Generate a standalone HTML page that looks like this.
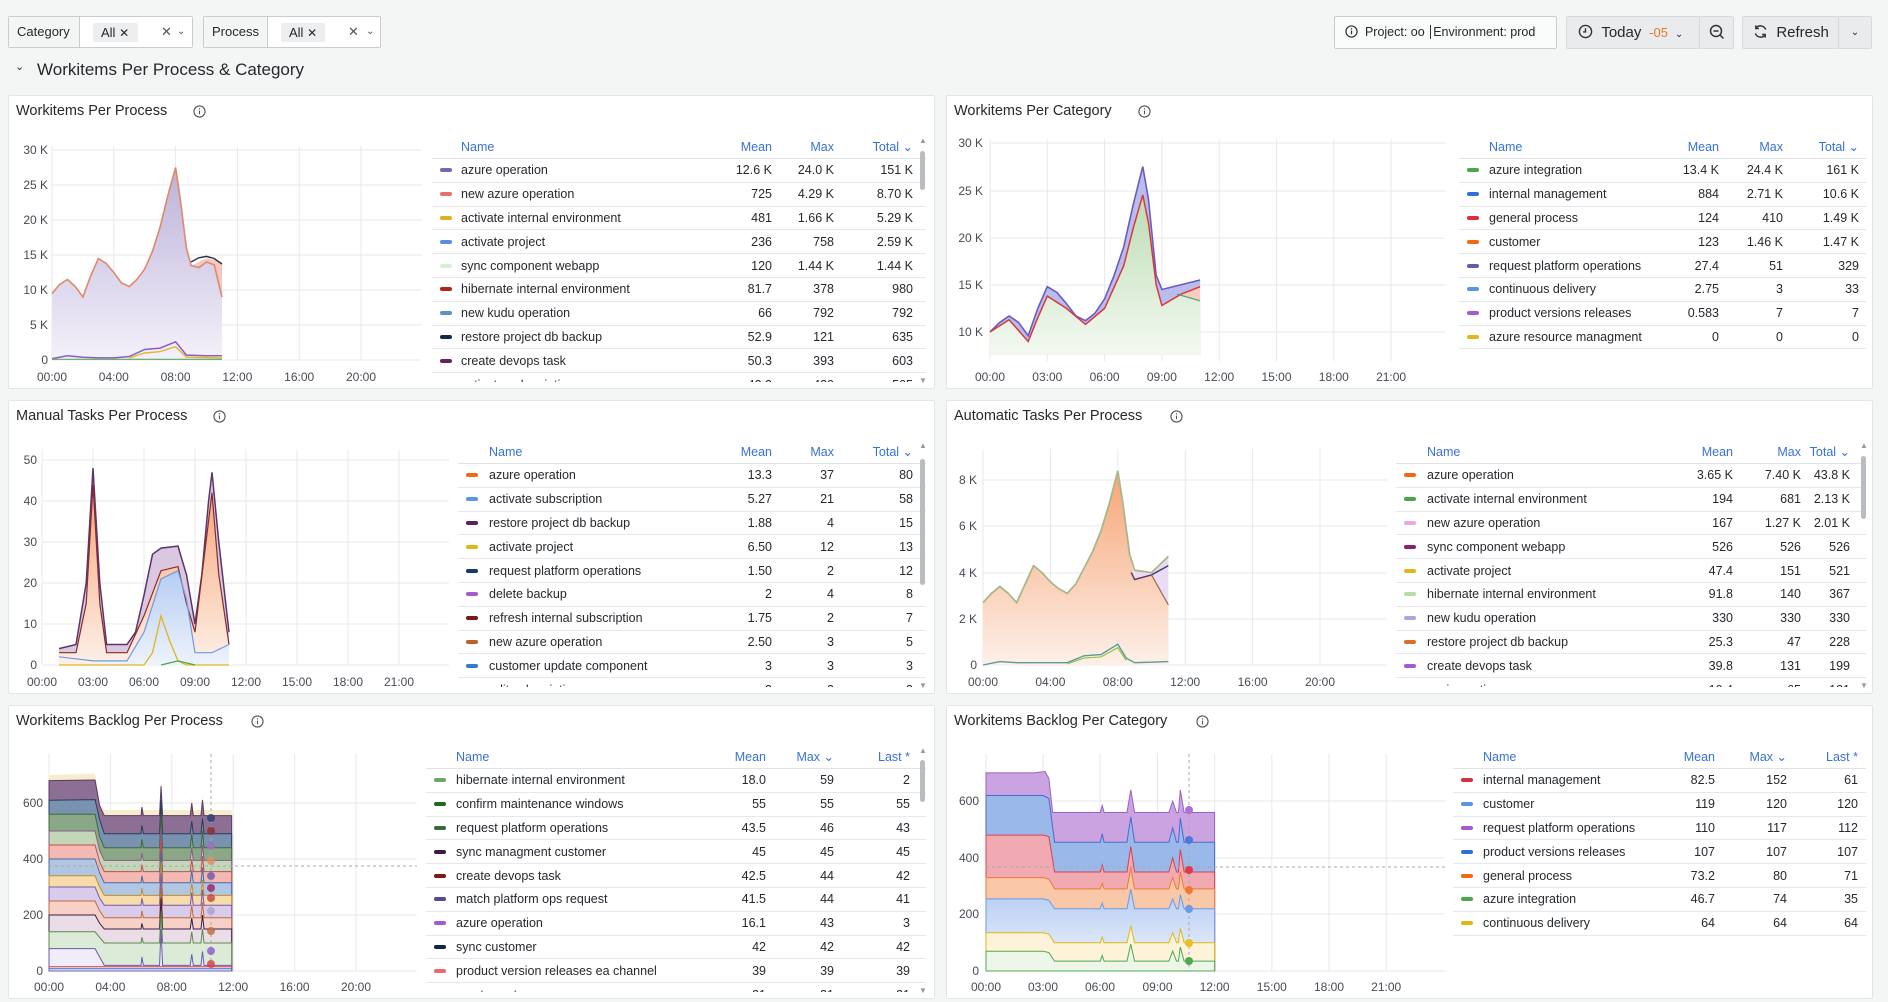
<!DOCTYPE html>
<html><head><meta charset="utf-8">
<style>
*{box-sizing:border-box}
body{margin:0;width:1888px;height:1002px;background:#f4f5f5;font-family:"Liberation Sans",sans-serif;color:#24292e;position:relative;overflow:hidden}
.abs{position:absolute}
.fbox{position:absolute;top:16px;height:32px;border:1px solid #c9ccd1;background:#fff;border-radius:2px;font-size:13px}
.flabel{position:absolute;left:0;top:0;bottom:0;background:#f4f5f5;border-right:1px solid #c9ccd1;padding:0 8px;line-height:30px}
.chip{position:absolute;top:6px;height:19px;background:#eceef0;border-radius:2px;line-height:19px;padding-left:8px;font-size:13px}
.ic{position:absolute;top:0;line-height:30px;color:#555;font-size:13px}
.btn{position:absolute;top:16px;height:33px;background:#e9ebed;border:1px solid #d6d9dd;border-radius:2px;font-size:15px;line-height:31px}
.panel{position:absolute;background:#fff;border:1px solid #e3e5e8;border-radius:2px;width:927px;height:294px;overflow:hidden}
.pt{position:absolute;left:7px;top:7px;font-size:14.5px;color:#24292e}
.info{position:absolute;top:9px}
svg text{font-family:"Liberation Sans",sans-serif;font-size:12px;fill:#464c54}
.tbl{position:absolute;top:39px;height:247px;overflow:hidden;font-size:12.5px}
.r{display:grid;height:23.8px;align-items:center;border-bottom:1px solid #e6e8eb}
.r span{white-space:nowrap;overflow:hidden}
.r span.n{text-align:right}
.h{color:#3871dc;height:24px;border-bottom:1px solid #dfe2e6}
.sw{display:block;width:12px;height:4px;border-radius:2px;margin-left:8px}
.sb{position:absolute;width:5px;background:#b9bcc0;border-radius:3px}
.ar{position:absolute;font-size:8px;color:#999}
</style></head><body>

<!-- filter bar -->
<div class="fbox" style="left:8px;width:185px"><div class="flabel" style="width:71px">Category</div>
<div class="chip" style="left:84px;width:45px">All <span style="font-size:12px">✕</span></div>
<div class="ic" style="left:152px">✕</div><div class="ic" style="left:168px;font-size:10px">⌄</div></div>
<div class="fbox" style="left:203px;width:178px"><div class="flabel" style="width:64px">Process</div>
<div class="chip" style="left:77px;width:44px">All <span style="font-size:12px">✕</span></div>
<div class="ic" style="left:144px">✕</div><div class="ic" style="left:162px;font-size:10px">⌄</div></div>

<div class="btn" style="left:1334px;width:223px;background:#fafbfb;border-color:#c9ccd1;font-size:12.5px;padding-left:10px">
<svg width="13" height="13" viewBox="0 0 14 14" style="vertical-align:-2px"><circle cx="7" cy="7" r="6" fill="none" stroke="#333" stroke-width="1.3"/><rect x="6.3" y="6" width="1.4" height="4" fill="#333"/><circle cx="7" cy="4.2" r=".8" fill="#333"/></svg>
&nbsp;Project: oo <span style="border-left:1px solid #333;margin:0 2px"></span> Environment: prod</div>
<div class="btn" style="left:1566px;width:134px;padding-left:11px">
<svg width="15" height="15" viewBox="0 0 16 16" style="vertical-align:-2px"><circle cx="8" cy="8" r="6.5" fill="none" stroke="#333" stroke-width="1.5"/><path d="M8 4.5V8.5H5.5" fill="none" stroke="#333" stroke-width="1.5"/></svg>
&nbsp;Today <span style="color:#e5792a;font-size:13px">&nbsp;-05</span> <span style="font-size:10px">&nbsp;⌄</span></div>
<div class="btn" style="left:1699px;width:35px;text-align:center">
<svg width="16" height="16" viewBox="0 0 16 16" style="vertical-align:-3px"><circle cx="7" cy="7" r="5.5" fill="none" stroke="#333" stroke-width="1.5"/><path d="M4.5 7h5M11 11l3.5 3.5" stroke="#333" stroke-width="1.5"/></svg></div>
<div class="btn" style="left:1742px;width:97px;padding-left:10px">
<svg width="15" height="15" viewBox="0 0 16 16" style="vertical-align:-2px"><path d="M13.5 6A6 6 0 0 0 3 4.5M2.5 10A6 6 0 0 0 13 11.5" fill="none" stroke="#333" stroke-width="1.5"/><path d="M3 1.5v3.3h3.3M13 14.5v-3.3H9.7" fill="none" stroke="#333" stroke-width="1.5"/></svg>
&nbsp;Refresh</div>
<div class="btn" style="left:1838px;width:34px;text-align:center;font-size:10px">⌄</div>

<div class="abs" style="left:15px;top:60px;font-size:11px;color:#333">⌄</div>
<div class="abs" style="left:37px;top:60px;font-size:17px;color:#24292e">Workitems Per Process &amp; Category</div>

<svg width="0" height="0" style="position:absolute"><defs>
<linearGradient id="gpur" x1="0" y1="0" x2="0" y2="1"><stop offset="0" stop-color="#f4f1fa"/><stop offset="1" stop-color="#bcb1d9"/></linearGradient>
<linearGradient id="ggrn" x1="0" y1="0" x2="0" y2="1"><stop offset="0" stop-color="#f3f9f1"/><stop offset="1" stop-color="#bcdcb3"/></linearGradient>
<linearGradient id="gora" x1="0" y1="0" x2="0" y2="1"><stop offset="0" stop-color="#fdf0e8"/><stop offset="1" stop-color="#f7a576"/></linearGradient>
<linearGradient id="gblu" x1="0" y1="0" x2="0" y2="1"><stop offset="0" stop-color="#eef3fc"/><stop offset="1" stop-color="#b5ccf2"/></linearGradient>
</defs></svg>

<!-- PANEL 1 -->
<div class="panel" style="left:8px;top:95px">
<div class="pt">Workitems Per Process</div>
<svg class="info" style="left:184px" width="13" height="13" viewBox="0 0 14 14"><circle cx="7" cy="7" r="6" fill="none" stroke="#555" stroke-width="1.2"/><rect x="6.4" y="6" width="1.2" height="4" fill="#555"/><circle cx="7" cy="4.2" r=".75" fill="#555"/></svg>
<svg class="abs" style="left:0;top:0" width="927" height="294">
<g stroke="#e8e9eb" stroke-width="1">
<path d="M43 264H413M43 229H413M43 194H413M43 159H413M43 124H413M43 89H413M43 54H413"/>
<path d="M43 50V264M104.8 50V264M166.6 50V264M228.4 50V264M290.2 50V264M352 50V264"/></g>
<g text-anchor="end"><text x="39" y="268">0</text><text x="39" y="233">5 K</text><text x="39" y="198">10 K</text><text x="39" y="163">15 K</text><text x="39" y="128">20 K</text><text x="39" y="93">25 K</text><text x="39" y="58">30 K</text></g>
<g text-anchor="middle"><text x="43" y="285">00:00</text><text x="104.8" y="285">04:00</text><text x="166.6" y="285">08:00</text><text x="228.4" y="285">12:00</text><text x="290.2" y="285">16:00</text><text x="352" y="285">20:00</text></g>
<g transform="translate(43,264) scale(15.45,-7)">
<path d="M0,0 L0,9.5 0.5,10.8 1,11.5 1.5,10.5 2,9 2.5,12 3,14.5 3.5,13.8 4,12.5 4.5,11 5,10.5 5.5,11.5 6,13 6.5,15.5 7,19 7.5,23.5 8,27.5 8.3,23 8.7,16 9,13.5 9.5,14 10,14.5 10.5,14.3 11,14 11,0Z" fill="url(#gpur)"/>
<path d="M9.3,13 10,14 10.5,13.8 11,9 11,14 10.5,14.3 10,14.5 9.5,14Z" fill="#f6c7bf"/>
<path d="M0,9.5 0.5,10.8 1,11.5 1.5,10.5 2,9 2.5,12 3,14.5 3.5,13.8 4,12.5 4.5,11 5,10.5 5.5,11.5 6,13 6.5,15.5 7,19 7.5,23.5 8,27.5 8.3,23 8.7,16 9,13.5 9.5,13.2 10,14 10.5,13.6 11,9" fill="none" stroke="#e2876c" stroke-width="1.6" vector-effect="non-scaling-stroke"/>
<path d="M9,14 9.5,14.6 10,14.8 10.5,14.5 11,13.7" fill="none" stroke="#2b2f45" stroke-width="1.4" vector-effect="non-scaling-stroke"/>
<path d="M0,0.2 1,0.6 2,0.4 3,0.3 4,0.3 5,0.5 6,1.5 7,1.7 8,2.6 8.7,0.7 10,0.6 11,0.6" fill="none" stroke="#8a5cc8" stroke-width="1.5" vector-effect="non-scaling-stroke"/>
<path d="M5,0.3 6,1 7,1.2 8,1.9 8.7,0.4 11,0.3" fill="none" stroke="#e2b82a" stroke-width="1.4" vector-effect="non-scaling-stroke"/>
<path d="M0,0.1 11,0.1" fill="none" stroke="#5aa85a" stroke-width="1.2" vector-effect="non-scaling-stroke"/>
</g></svg>
<div class="tbl" style="left:423px;width:494px">
<div class="r h" style="grid-template-columns:29px 251px 60px 62px 79px 13px"><span></span><span>Name</span><span class="n">Mean</span><span class="n">Max</span><span class="n">Total ⌄</span><span></span></div>
<div class="r" style="grid-template-columns:29px 251px 60px 62px 79px 13px"><i class="sw" style="background:#7a63b0"></i><span>azure operation</span><span class="n">12.6 K</span><span class="n">24.0 K</span><span class="n">151 K</span></div>
<div class="r" style="grid-template-columns:29px 251px 60px 62px 79px 13px"><i class="sw" style="background:#e8706a"></i><span>new azure operation</span><span class="n">725</span><span class="n">4.29 K</span><span class="n">8.70 K</span></div>
<div class="r" style="grid-template-columns:29px 251px 60px 62px 79px 13px"><i class="sw" style="background:#e0b11a"></i><span>activate internal environment</span><span class="n">481</span><span class="n">1.66 K</span><span class="n">5.29 K</span></div>
<div class="r" style="grid-template-columns:29px 251px 60px 62px 79px 13px"><i class="sw" style="background:#5a8fe0"></i><span>activate project</span><span class="n">236</span><span class="n">758</span><span class="n">2.59 K</span></div>
<div class="r" style="grid-template-columns:29px 251px 60px 62px 79px 13px"><i class="sw" style="background:#d6f0d0"></i><span>sync component webapp</span><span class="n">120</span><span class="n">1.44 K</span><span class="n">1.44 K</span></div>
<div class="r" style="grid-template-columns:29px 251px 60px 62px 79px 13px"><i class="sw" style="background:#b02418"></i><span>hibernate internal environment</span><span class="n">81.7</span><span class="n">378</span><span class="n">980</span></div>
<div class="r" style="grid-template-columns:29px 251px 60px 62px 79px 13px"><i class="sw" style="background:#5b92c8"></i><span>new kudu operation</span><span class="n">66</span><span class="n">792</span><span class="n">792</span></div>
<div class="r" style="grid-template-columns:29px 251px 60px 62px 79px 13px"><i class="sw" style="background:#142a4a"></i><span>restore project db backup</span><span class="n">52.9</span><span class="n">121</span><span class="n">635</span></div>
<div class="r" style="grid-template-columns:29px 251px 60px 62px 79px 13px"><i class="sw" style="background:#6a2060"></i><span>create devops task</span><span class="n">50.3</span><span class="n">393</span><span class="n">603</span></div>
<div class="r" style="grid-template-columns:29px 251px 60px 62px 79px 13px"><i class="sw" style="background:#999"></i><span>activate subscription</span><span class="n">42.2</span><span class="n">420</span><span class="n">505</span></div>
</div>
<div class="ar" style="left:910px;top:40px">▲</div><div class="sb" style="left:911px;top:55px;height:39px"></div><div class="ar" style="left:910px;top:280px">▼</div>
</div>

<!-- PANEL 2 -->
<div class="panel" style="left:946px;top:95px">
<div class="pt">Workitems Per Category</div>
<svg class="info" style="left:191px" width="13" height="13" viewBox="0 0 14 14"><circle cx="7" cy="7" r="6" fill="none" stroke="#555" stroke-width="1.2"/><rect x="6.4" y="6" width="1.2" height="4" fill="#555"/><circle cx="7" cy="4.2" r=".75" fill="#555"/></svg>
<svg class="abs" style="left:0;top:0" width="927" height="294">
<g stroke="#e8e9eb"><path d="M43 236H498M43 189H498M43 142H498M43 95H498M43 47H498"/>
<path d="M43 43V265M100.3 43V265M157.6 43V265M214.9 43V265M272.2 43V265M329.5 43V265M386.8 43V265M444.1 43V265"/></g>
<g text-anchor="end"><text x="36" y="240">10 K</text><text x="36" y="193">15 K</text><text x="36" y="146">20 K</text><text x="36" y="99">25 K</text><text x="36" y="51">30 K</text></g>
<g text-anchor="middle"><text x="43" y="285">00:00</text><text x="100.3" y="285">03:00</text><text x="157.6" y="285">06:00</text><text x="214.9" y="285">09:00</text><text x="272.2" y="285">12:00</text><text x="329.5" y="285">15:00</text><text x="386.8" y="285">18:00</text><text x="444.1" y="285">21:00</text></g>
<g transform="translate(43,330.5) scale(19.1,-9.45)">
<path d="M0,7.6 L0,10 0.5,11 1,11.7 1.5,11 2,9.6 2.5,12.5 3,14.8 3.5,14.2 4,13 4.5,11.7 5,11.2 5.5,12 6,13.5 6.5,16 7,19 7.5,23.5 8,27.5 8.3,24 8.7,16 9,14.5 10,15 11,15.5 11,7.6Z" fill="#b9bdee"/>
<path d="M0,7.6 L0,10 1,11.3 2,9 2.5,11.5 3,13.8 4,12.5 5,10.8 6,12.5 7,17 7.5,21 8,24.5 8.3,21.5 8.7,15 9,12.8 10,14 11,14.8 11,7.6Z" fill="#f6cdbf"/>
<path d="M0,7.6 L0,10 1,11.3 2,9 2.5,11.5 3,13.8 4,12.5 5,10.8 6,12.5 7,17 7.5,21 8,24.5 8.3,21.5 8.7,15 9,12.8 10,14 11,13.3 11,7.6Z" fill="url(#ggrn)"/>
<path d="M0,10 0.5,11 1,11.7 1.5,11 2,9.6 2.5,12.5 3,14.8 3.5,14.2 4,13 4.5,11.7 5,11.2 5.5,12 6,13.5 6.5,16 7,19 7.5,23.5 8,27.5 8.3,24 8.7,16 9,14.5 10,15 11,15.5" fill="none" stroke="#6a5bc0" stroke-width="1.6" vector-effect="non-scaling-stroke"/>
<path d="M0,10 1,11.3 2,9 2.5,11.5 3,13.8 4,12.5 5,10.8 6,12.5 7,17 7.5,21 8,24.5 8.3,21.5 8.7,15 9,12.8 10,14 11,14.8" fill="none" stroke="#d83a3a" stroke-width="1.5" vector-effect="non-scaling-stroke"/>
<path d="M9.8,14 11,13.3" fill="none" stroke="#5a9a6a" stroke-width="1.2" vector-effect="non-scaling-stroke"/>
</g></svg>
<div class="tbl" style="left:512px;width:407px">
<div class="r h" style="grid-template-columns:30px 170px 60px 64px 76px 7px"><span></span><span>Name</span><span class="n">Mean</span><span class="n">Max</span><span class="n">Total ⌄</span></div>
<div class="r" style="grid-template-columns:30px 170px 60px 64px 76px 7px"><i class="sw" style="background:#4ca64c"></i><span>azure integration</span><span class="n">13.4 K</span><span class="n">24.4 K</span><span class="n">161 K</span></div>
<div class="r" style="grid-template-columns:30px 170px 60px 64px 76px 7px"><i class="sw" style="background:#2f6fd8"></i><span>internal management</span><span class="n">884</span><span class="n">2.71 K</span><span class="n">10.6 K</span></div>
<div class="r" style="grid-template-columns:30px 170px 60px 64px 76px 7px"><i class="sw" style="background:#dc2f3c"></i><span>general process</span><span class="n">124</span><span class="n">410</span><span class="n">1.49 K</span></div>
<div class="r" style="grid-template-columns:30px 170px 60px 64px 76px 7px"><i class="sw" style="background:#f06a14"></i><span>customer</span><span class="n">123</span><span class="n">1.46 K</span><span class="n">1.47 K</span></div>
<div class="r" style="grid-template-columns:30px 170px 60px 64px 76px 7px"><i class="sw" style="background:#6a5aa8"></i><span>request platform operations</span><span class="n">27.4</span><span class="n">51</span><span class="n">329</span></div>
<div class="r" style="grid-template-columns:30px 170px 60px 64px 76px 7px"><i class="sw" style="background:#5a95e0"></i><span>continuous delivery</span><span class="n">2.75</span><span class="n">3</span><span class="n">33</span></div>
<div class="r" style="grid-template-columns:30px 170px 60px 64px 76px 7px"><i class="sw" style="background:#a45ad0"></i><span>product versions releases</span><span class="n">0.583</span><span class="n">7</span><span class="n">7</span></div>
<div class="r" style="grid-template-columns:30px 170px 60px 64px 76px 7px"><i class="sw" style="background:#e0b61a"></i><span>azure resource managment</span><span class="n">0</span><span class="n">0</span><span class="n">0</span></div>
</div>
</div>

<!-- PANEL 3 -->
<div class="panel" style="left:8px;top:400px">
<div class="pt">Manual Tasks Per Process</div>
<svg class="info" style="left:204px" width="13" height="13" viewBox="0 0 14 14"><circle cx="7" cy="7" r="6" fill="none" stroke="#555" stroke-width="1.2"/><rect x="6.4" y="6" width="1.2" height="4" fill="#555"/><circle cx="7" cy="4.2" r=".75" fill="#555"/></svg>
<svg class="abs" style="left:0;top:0" width="927" height="294">
<g stroke="#e8e9eb"><path d="M33 264H440M33 223H440M33 182H440M33 141H440M33 100H440M33 59H440"/>
<path d="M33 48V264M84 48V264M135 48V264M186 48V264M237 48V264M288 48V264M339 48V264M390 48V264"/></g>
<g text-anchor="end"><text x="28" y="268">0</text><text x="28" y="227">10</text><text x="28" y="186">20</text><text x="28" y="145">30</text><text x="28" y="104">40</text><text x="28" y="63">50</text></g>
<g text-anchor="middle"><text x="33" y="285">00:00</text><text x="84" y="285">03:00</text><text x="135" y="285">06:00</text><text x="186" y="285">09:00</text><text x="237" y="285">12:00</text><text x="288" y="285">15:00</text><text x="339" y="285">18:00</text><text x="390" y="285">21:00</text></g>
<g transform="translate(33,264) scale(17,-4.1)">
<path d="M1,0 L1,4 2,5 2.6,20 3,48 3.4,20 3.8,5 5,5 5.5,8 6,17 6.5,27 7,28.5 8,29 8.5,22 9,10 9.4,22 9.8,40 10,47 10.4,30 11,8 11,0Z" fill="#d9c8df"/>
<path d="M1,0 L1,3 2,3 2.6,15 3,44 3.4,15 3.8,3 5,3 6,12 7,23 8,24 8.5,15 9,8 9.5,25 10,42 10.4,22 11,5 11,0Z" fill="url(#gora)"/>
<path d="M3.5,0 L3.5,1 5,1 6,8 7,21 8,23 8.5,16 9,3 10,3 11,5 11,0Z" fill="url(#gblu)"/>
<path d="M1,4 2,5 2.6,20 3,48 3.4,20 3.8,5 5,5 5.5,8 6,17 6.5,27 7,28.5 8,29 8.5,22 9,10 9.4,22 9.8,40 10,47 10.4,30 11,8" fill="none" stroke="#5b3470" stroke-width="1.5" vector-effect="non-scaling-stroke"/>
<path d="M1,3 2,3 2.6,15 3,44 3.4,15 3.8,3 5,3 6,12 7,23 8,24 8.5,15 9,8 9.5,25 10,42 10.4,22 11,5" fill="none" stroke="#8a2a2a" stroke-width="1.2" vector-effect="non-scaling-stroke"/>
<path d="M1,2 3,1 4,1 5,1 6,8 7,21 8,23 8.5,16 9,3 10,3 11,5" fill="none" stroke="#6f9be0" stroke-width="1.2" vector-effect="non-scaling-stroke"/>
<path d="M1,0 6,0 6.5,3 7,12 7.5,6 8,1 8.5,0 11,0" fill="none" stroke="#e0b61a" stroke-width="1.3" vector-effect="non-scaling-stroke"/>
<path d="M7,0 8,1 9,0" fill="none" stroke="#4ca64c" stroke-width="1.2" vector-effect="non-scaling-stroke"/>
</g></svg>
<div class="tbl" style="left:449px;width:468px">
<div class="r h" style="grid-template-columns:31px 223px 60px 62px 79px 13px"><span></span><span>Name</span><span class="n">Mean</span><span class="n">Max</span><span class="n">Total ⌄</span></div>
<div class="r" style="grid-template-columns:31px 223px 60px 62px 79px 13px"><i class="sw" style="background:#f06a14"></i><span>azure operation</span><span class="n">13.3</span><span class="n">37</span><span class="n">80</span></div>
<div class="r" style="grid-template-columns:31px 223px 60px 62px 79px 13px"><i class="sw" style="background:#5a95e0"></i><span>activate subscription</span><span class="n">5.27</span><span class="n">21</span><span class="n">58</span></div>
<div class="r" style="grid-template-columns:31px 223px 60px 62px 79px 13px"><i class="sw" style="background:#5b2058"></i><span>restore project db backup</span><span class="n">1.88</span><span class="n">4</span><span class="n">15</span></div>
<div class="r" style="grid-template-columns:31px 223px 60px 62px 79px 13px"><i class="sw" style="background:#e0b61a"></i><span>activate project</span><span class="n">6.50</span><span class="n">12</span><span class="n">13</span></div>
<div class="r" style="grid-template-columns:31px 223px 60px 62px 79px 13px"><i class="sw" style="background:#143a6a"></i><span>request platform operations</span><span class="n">1.50</span><span class="n">2</span><span class="n">12</span></div>
<div class="r" style="grid-template-columns:31px 223px 60px 62px 79px 13px"><i class="sw" style="background:#a45ad0"></i><span>delete backup</span><span class="n">2</span><span class="n">4</span><span class="n">8</span></div>
<div class="r" style="grid-template-columns:31px 223px 60px 62px 79px 13px"><i class="sw" style="background:#7a1a14"></i><span>refresh internal subscription</span><span class="n">1.75</span><span class="n">2</span><span class="n">7</span></div>
<div class="r" style="grid-template-columns:31px 223px 60px 62px 79px 13px"><i class="sw" style="background:#c0602a"></i><span>new azure operation</span><span class="n">2.50</span><span class="n">3</span><span class="n">5</span></div>
<div class="r" style="grid-template-columns:31px 223px 60px 62px 79px 13px"><i class="sw" style="background:#3a7ad0"></i><span>customer update component</span><span class="n">3</span><span class="n">3</span><span class="n">3</span></div>
<div class="r" style="grid-template-columns:31px 223px 60px 62px 79px 13px"><i class="sw" style="background:#999"></i><span>edit subscription</span><span class="n">3</span><span class="n">3</span><span class="n">3</span></div>
</div>
<div class="ar" style="left:910px;top:40px">▲</div><div class="sb" style="left:911px;top:58px;height:126px"></div><div class="ar" style="left:910px;top:280px">▼</div>
</div>

<!-- PANEL 4 -->
<div class="panel" style="left:946px;top:400px">
<div class="pt">Automatic Tasks Per Process</div>
<svg class="info" style="left:223px" width="13" height="13" viewBox="0 0 14 14"><circle cx="7" cy="7" r="6" fill="none" stroke="#555" stroke-width="1.2"/><rect x="6.4" y="6" width="1.2" height="4" fill="#555"/><circle cx="7" cy="4.2" r=".75" fill="#555"/></svg>
<svg class="abs" style="left:0;top:0" width="927" height="294">
<g stroke="#e8e9eb"><path d="M36 264H440M36 218H440M36 172H440M36 125H440M36 79H440"/>
<path d="M36 48V264M103.4 48V264M170.8 48V264M238.2 48V264M305.6 48V264M373 48V264"/></g>
<g text-anchor="end"><text x="30" y="268">0</text><text x="30" y="222">2 K</text><text x="30" y="176">4 K</text><text x="30" y="129">6 K</text><text x="30" y="83">8 K</text></g>
<g text-anchor="middle"><text x="36" y="285">00:00</text><text x="103.4" y="285">04:00</text><text x="170.8" y="285">08:00</text><text x="238.2" y="285">12:00</text><text x="305.6" y="285">16:00</text><text x="373" y="285">20:00</text></g>
<g transform="translate(36,264) scale(16.85,-23.1)">
<path d="M9,0 L9,4.1 10,4.0 11,4.7 11,0Z" fill="#eadcf2"/>
<path d="M0,0 L0,2.7 0.5,3.1 1,3.4 1.5,3.1 2,2.7 2.5,3.5 3,4.3 3.5,4.0 4,3.6 4.5,3.3 5,3.1 5.5,3.5 6,4.2 6.5,4.9 7,5.8 7.5,7.0 8,8.4 8.3,7.0 8.7,4.8 9,3.8 10,3.9 11,2.6 11,0Z" fill="url(#gora)"/>
<path d="M0,2.7 0.5,3.1 1,3.4 1.5,3.1 2,2.7 2.5,3.5 3,4.3 3.5,4.0 4,3.6 4.5,3.3 5,3.1 5.5,3.5 6,4.2 6.5,4.9 7,5.8 7.5,7.0 8,8.4 8.3,7.0 8.7,4.8 9,4.1 10,4.0 11,4.7" fill="none" stroke="#a8b88a" stroke-width="1.8" vector-effect="non-scaling-stroke"/>
<path d="M8.8,4 9,3.7 10,3.9 11,4.3" fill="none" stroke="#4a3a80" stroke-width="1.4" vector-effect="non-scaling-stroke"/>
<path d="M10,3.9 11,2.6" fill="none" stroke="#a06850" stroke-width="1.2" vector-effect="non-scaling-stroke"/>
<path d="M0,0 1,0.15 2,0.1 5,0.1 6,0.4 7,0.45 8,0.9 8.5,0.3 9,0.1 11,0.15" fill="none" stroke="#5a9aa0" stroke-width="1.4" vector-effect="non-scaling-stroke"/>
<path d="M5,0.05 6,0.3 7,0.35 8,0.75 8.5,0.2" fill="none" stroke="#8fc840" stroke-width="1.2" vector-effect="non-scaling-stroke"/>
</g></svg>
<div class="tbl" style="left:449px;width:470px">
<div class="r h" style="grid-template-columns:31px 246px 60px 68px 49px 16px"><span></span><span>Name</span><span class="n">Mean</span><span class="n">Max</span><span class="n">Total ⌄</span></div>
<div class="r" style="grid-template-columns:31px 246px 60px 68px 49px 16px"><i class="sw" style="background:#f06a14"></i><span>azure operation</span><span class="n">3.65 K</span><span class="n">7.40 K</span><span class="n">43.8 K</span></div>
<div class="r" style="grid-template-columns:31px 246px 60px 68px 49px 16px"><i class="sw" style="background:#4ca64c"></i><span>activate internal environment</span><span class="n">194</span><span class="n">681</span><span class="n">2.13 K</span></div>
<div class="r" style="grid-template-columns:31px 246px 60px 68px 49px 16px"><i class="sw" style="background:#e8a8e0"></i><span>new azure operation</span><span class="n">167</span><span class="n">1.27 K</span><span class="n">2.01 K</span></div>
<div class="r" style="grid-template-columns:31px 246px 60px 68px 49px 16px"><i class="sw" style="background:#8a2070"></i><span>sync component webapp</span><span class="n">526</span><span class="n">526</span><span class="n">526</span></div>
<div class="r" style="grid-template-columns:31px 246px 60px 68px 49px 16px"><i class="sw" style="background:#e0b61a"></i><span>activate project</span><span class="n">47.4</span><span class="n">151</span><span class="n">521</span></div>
<div class="r" style="grid-template-columns:31px 246px 60px 68px 49px 16px"><i class="sw" style="background:#b8dca8"></i><span>hibernate internal environment</span><span class="n">91.8</span><span class="n">140</span><span class="n">367</span></div>
<div class="r" style="grid-template-columns:31px 246px 60px 68px 49px 16px"><i class="sw" style="background:#a8a8dc"></i><span>new kudu operation</span><span class="n">330</span><span class="n">330</span><span class="n">330</span></div>
<div class="r" style="grid-template-columns:31px 246px 60px 68px 49px 16px"><i class="sw" style="background:#d8702a"></i><span>restore project db backup</span><span class="n">25.3</span><span class="n">47</span><span class="n">228</span></div>
<div class="r" style="grid-template-columns:31px 246px 60px 68px 49px 16px"><i class="sw" style="background:#a45ad0"></i><span>create devops task</span><span class="n">39.8</span><span class="n">131</span><span class="n">199</span></div>
<div class="r" style="grid-template-columns:31px 246px 60px 68px 49px 16px"><i class="sw" style="background:#999"></i><span>assign action</span><span class="n">10.4</span><span class="n">65</span><span class="n">181</span></div>
</div>
<div class="ar" style="left:913px;top:40px">▲</div><div class="sb" style="left:914px;top:55px;height:63px"></div><div class="ar" style="left:913px;top:280px">▼</div>
</div>

<!-- PANEL 5 -->
<div class="panel" style="left:8px;top:705px">
<div class="pt">Workitems Backlog Per Process</div>
<svg class="info" style="left:242px" width="13" height="13" viewBox="0 0 14 14"><circle cx="7" cy="7" r="6" fill="none" stroke="#555" stroke-width="1.2"/><rect x="6.4" y="6" width="1.2" height="4" fill="#555"/><circle cx="7" cy="4.2" r=".75" fill="#555"/></svg>
<svg class="abs" style="left:0;top:0" width="927" height="294">
<g stroke="#e8e9eb"><path d="M40 265H408M40 209H408M40 153H408M40 97H408"/>
<path d="M40 48V265M101.4 48V265M162.8 48V265M224.2 48V265M285.6 48V265M347 48V265"/></g>
<g text-anchor="end"><text x="34" y="269">0</text><text x="34" y="213">200</text><text x="34" y="157">400</text><text x="34" y="101">600</text></g>
<g text-anchor="middle"><text x="40" y="285">00:00</text><text x="101.4" y="285">04:00</text><text x="162.8" y="285">08:00</text><text x="224.2" y="285">12:00</text><text x="285.6" y="285">16:00</text><text x="347" y="285">20:00</text></g>
<g transform="translate(40,265) scale(15.35,-0.28)" stroke-width="1" vector-effect="non-scaling-stroke">
<path d="M0,0 L0,700 3,705 3.3,600 3.6,575 6,575 6.05,600 6.15,575 7.2,575 7.3,680 7.4,575 9.2,575 9.3,620 9.4,575 9.9,575 10,630 10.1,575 11.9,575 11.9,0Z" fill="#f6edcf"/>
<path d="M0,0 L0,680 3,682 3.3,590 3.6,555 6,555 6.05,585 6.15,555 7.2,555 7.3,660 7.4,555 9.2,555 9.3,600 9.4,555 9.9,555 10,610 10.1,555 11.9,555 11.9,0Z" fill="#8d6f93" stroke="#5a3a60" vector-effect="non-scaling-stroke"/>
<path d="M0,0 L0,610 3,612 3.3,540 3.6,490 6,490 6.05,520 6.15,490 7.2,490 7.3,610 7.4,490 9.2,490 9.3,535 9.4,490 9.9,490 10,545 10.1,490 11.9,490 11.9,0Z" fill="#7892b0" stroke="#2a3a60" vector-effect="non-scaling-stroke"/>
<path d="M0,0 L0,560 3,560 3.3,480 3.6,440 6,440 6.05,470 6.15,440 7.2,440 7.3,560 7.4,440 9.2,440 9.3,490 9.4,440 9.9,440 10,500 10.1,440 11.9,440 11.9,0Z" fill="#8aa886" stroke="#3a6a3a" vector-effect="non-scaling-stroke"/>
<path d="M0,0 L0,500 3,500 3.3,430 3.6,395 6,395 6.05,420 6.15,395 7.2,395 7.3,510 7.4,395 9.2,395 9.3,440 9.4,395 9.9,395 10,450 10.1,395 11.9,395 11.9,0Z" fill="#c2d6b8" stroke="#8a5a8a" vector-effect="non-scaling-stroke"/>
<path d="M0,0 L0,450 3,450 3.3,390 3.6,355 6,355 6.05,380 6.15,355 7.2,355 7.3,470 7.4,355 9.2,355 9.3,400 9.4,355 9.9,355 10,410 10.1,355 11.9,355 11.9,0Z" fill="#f3b9b2" stroke="#c05050" vector-effect="non-scaling-stroke"/>
<path d="M0,0 L0,400 3,400 3.3,350 3.6,315 6,315 6.05,340 6.15,315 7.2,315 7.3,430 7.4,315 9.2,315 9.3,360 9.4,315 9.9,315 10,370 10.1,315 11.9,315 11.9,0Z" fill="#b0c6e2" stroke="#4a6aa0" vector-effect="non-scaling-stroke"/>
<path d="M0,0 L0,340 3,340 3.3,300 3.6,270 6,270 6.05,295 6.15,270 7.2,270 7.3,390 7.4,270 9.2,270 9.3,315 9.4,270 9.9,270 10,325 10.1,270 11.9,270 11.9,0Z" fill="#f6dbab" stroke="#c09030" vector-effect="non-scaling-stroke"/>
<path d="M0,0 L0,300 3,300 3.3,260 3.6,235 6,235 6.05,260 6.15,235 7.2,235 7.3,350 7.4,235 9.2,235 9.3,280 9.4,235 9.9,235 10,290 10.1,235 11.9,235 11.9,0Z" fill="#d9cbeb" stroke="#7a5aa8" vector-effect="non-scaling-stroke"/>
<path d="M0,0 L0,250 3,250 3.3,215 3.6,190 6,190 6.05,215 6.15,190 7.2,190 7.3,300 7.4,190 9.2,190 9.3,235 9.4,190 9.9,190 10,245 10.1,190 11.9,190 11.9,0Z" fill="#f7d0c8" stroke="#c06a3a" vector-effect="non-scaling-stroke"/>
<path d="M0,0 L0,200 3,200 3.3,170 3.6,150 6,150 6.05,170 6.15,150 7.2,150 7.3,260 7.4,150 9.2,150 9.3,190 9.4,150 9.9,150 10,200 10.1,150 11.9,150 11.9,0Z" fill="#eadde8" stroke="#3a2040" vector-effect="non-scaling-stroke"/>
<path d="M0,0 L0,140 3,140 3.3,120 3.6,100 6,100 6.05,120 6.15,100 7.2,100 7.3,210 7.4,100 9.2,100 9.3,140 9.4,100 9.9,100 10,150 10.1,100 11.9,100 11.9,0Z" fill="#dcebd8" stroke="#5a8a4a" vector-effect="non-scaling-stroke"/>
<path d="M0,0 L0,80 3,80 3.3,50 3.6,20 6,20 6.05,50 6.15,20 7.2,20 7.3,150 7.4,20 9.2,20 9.3,60 9.4,20 9.9,20 10,70 10.1,20 11.9,20 11.9,0Z" fill="#efedf8" stroke="#6a5ab0" vector-effect="non-scaling-stroke"/>
<path d="M0,15 11.9,15" stroke="#d83a3a" vector-effect="non-scaling-stroke"/>
<path d="M0,8 11.9,8" stroke="#3a6ad0" vector-effect="non-scaling-stroke"/>
</g>
<path d="M202 48V265" stroke="#aaa" stroke-dasharray="3 3"/>
<path d="M40 160H408" stroke="#aaa" stroke-dasharray="3 3"/>
<g opacity=".8"><circle cx="202" cy="112" r="4" fill="#2a3a70"/><circle cx="202" cy="125" r="4" fill="#8a2a2a"/><circle cx="202" cy="140" r="4" fill="#a070c0"/><circle cx="202" cy="155" r="4" fill="#e09060"/><circle cx="202" cy="170" r="4" fill="#6a5ab0"/><circle cx="202" cy="182" r="4" fill="#a02060"/><circle cx="202" cy="192" r="4" fill="#d04040"/><circle cx="202" cy="205" r="4" fill="#b0a0d0"/><circle cx="202" cy="225" r="4" fill="#c06a3a"/><circle cx="202" cy="245" r="4" fill="#8a5ad0"/><circle cx="202" cy="258" r="4" fill="#d04040"/></g>
</svg>
<div class="tbl" style="left:417px;width:500px">
<div class="r h" style="grid-template-columns:30px 250px 60px 68px 76px 16px"><span></span><span>Name</span><span class="n">Mean</span><span class="n">Max ⌄</span><span class="n">Last *</span></div>
<div class="r" style="grid-template-columns:30px 250px 60px 68px 76px 16px"><i class="sw" style="background:#6aa86a"></i><span>hibernate internal environment</span><span class="n">18.0</span><span class="n">59</span><span class="n">2</span></div>
<div class="r" style="grid-template-columns:30px 250px 60px 68px 76px 16px"><i class="sw" style="background:#1f6a1f"></i><span>confirm maintenance windows</span><span class="n">55</span><span class="n">55</span><span class="n">55</span></div>
<div class="r" style="grid-template-columns:30px 250px 60px 68px 76px 16px"><i class="sw" style="background:#3a6a3a"></i><span>request platform operations</span><span class="n">43.5</span><span class="n">46</span><span class="n">43</span></div>
<div class="r" style="grid-template-columns:30px 250px 60px 68px 76px 16px"><i class="sw" style="background:#3a1a40"></i><span>sync managment customer</span><span class="n">45</span><span class="n">45</span><span class="n">45</span></div>
<div class="r" style="grid-template-columns:30px 250px 60px 68px 76px 16px"><i class="sw" style="background:#7a1a14"></i><span>create devops task</span><span class="n">42.5</span><span class="n">44</span><span class="n">42</span></div>
<div class="r" style="grid-template-columns:30px 250px 60px 68px 76px 16px"><i class="sw" style="background:#5a4a90"></i><span>match platform ops request</span><span class="n">41.5</span><span class="n">44</span><span class="n">41</span></div>
<div class="r" style="grid-template-columns:30px 250px 60px 68px 76px 16px"><i class="sw" style="background:#a45ad0"></i><span>azure operation</span><span class="n">16.1</span><span class="n">43</span><span class="n">3</span></div>
<div class="r" style="grid-template-columns:30px 250px 60px 68px 76px 16px"><i class="sw" style="background:#0f2540"></i><span>sync customer</span><span class="n">42</span><span class="n">42</span><span class="n">42</span></div>
<div class="r" style="grid-template-columns:30px 250px 60px 68px 76px 16px"><i class="sw" style="background:#e86a6a"></i><span>product version releases ea channel</span><span class="n">39</span><span class="n">39</span><span class="n">39</span></div>
<div class="r" style="grid-template-columns:30px 250px 60px 68px 76px 16px"><i class="sw" style="background:#999"></i><span>create customer</span><span class="n">31</span><span class="n">31</span><span class="n">31</span></div>
</div>
<div class="ar" style="left:910px;top:40px">▲</div><div class="sb" style="left:911px;top:54px;height:42px"></div><div class="ar" style="left:910px;top:280px">▼</div>
</div>

<!-- PANEL 6 -->
<div class="panel" style="left:946px;top:705px">
<div class="pt">Workitems Backlog Per Category</div>
<svg class="info" style="left:249px" width="13" height="13" viewBox="0 0 14 14"><circle cx="7" cy="7" r="6" fill="none" stroke="#555" stroke-width="1.2"/><rect x="6.4" y="6" width="1.2" height="4" fill="#555"/><circle cx="7" cy="4.2" r=".75" fill="#555"/></svg>
<svg class="abs" style="left:0;top:0" width="927" height="294">
<g stroke="#e8e9eb"><path d="M39 265H498M39 208H498M39 152H498M39 95H498"/>
<path d="M39 48V265M96 48V265M153 48V265M210.5 48V265M267.6 48V265M324.8 48V265M382 48V265M439.2 48V265"/></g>
<g text-anchor="end"><text x="32" y="269">0</text><text x="32" y="212">200</text><text x="32" y="156">400</text><text x="32" y="99">600</text></g>
<g text-anchor="middle"><text x="39" y="285">00:00</text><text x="96" y="285">03:00</text><text x="153" y="285">06:00</text><text x="210.5" y="285">09:00</text><text x="267.6" y="285">12:00</text><text x="324.8" y="285">15:00</text><text x="382" y="285">18:00</text><text x="439.2" y="285">21:00</text></g>
<g transform="translate(39,265) scale(19.05,-0.283)">
<path d="M0,0 L0,700 2.5,700 3.1,705 3.3,680 3.5,560 6,560 6.1,585 6.2,560 7.4,560 7.6,640 7.8,560 9.6,560 9.8,600 10,560 10.1,560 10.2,640 10.4,560 12,560 12,0Z" fill="#caa3e0" stroke="#9a60c8" vector-effect="non-scaling-stroke"/>
<path d="M0,0 L0,620 3,620 3.3,610 3.6,455 6,455 6.1,485 6.2,455 7.4,455 7.6,545 7.8,455 9.6,455 9.8,505 10,455 10.1,455 10.2,540 10.4,455 12,455 12,0Z" fill="#9ab8ea" stroke="#4a6ad0" vector-effect="non-scaling-stroke"/>
<path d="M0,0 L0,480 3,480 3.3,475 3.6,350 6,350 6.1,375 6.2,350 7.4,350 7.6,440 7.8,350 9.6,350 9.8,400 10,350 10.1,350 10.2,430 10.4,350 12,350 12,0Z" fill="#f2aab2" stroke="#d84050" vector-effect="non-scaling-stroke"/>
<path d="M0,0 L0,330 3,330 3.3,325 3.6,290 6,290 6.1,310 6.2,290 7.4,290 7.6,365 7.8,290 9.6,290 9.8,330 10,290 10.1,290 10.2,350 10.4,290 12,290 12,0Z" fill="#f8c8a8" stroke="#f07a30" vector-effect="non-scaling-stroke"/>
<path d="M0,0 L0,255 3,255 3.3,250 3.6,220 6,220 6.1,240 6.2,220 7.4,220 7.6,290 7.8,220 9.6,220 9.8,255 10,220 10.1,220 10.2,270 10.4,220 12,220 12,0Z" fill="url(#gblu)" stroke="#6a9be6" vector-effect="non-scaling-stroke"/>
<path d="M0,0 L0,135 3,135 3.3,130 3.6,100 6,100 6.1,120 6.2,100 7.4,100 7.6,160 7.8,100 9.6,100 9.8,135 10,100 10.1,100 10.2,150 10.4,100 12,100 12,0Z" fill="#fcf3d8" stroke="#e0b61a" vector-effect="non-scaling-stroke"/>
<path d="M0,0 L0,70 3,70 3.3,65 3.6,35 6,35 6.1,55 6.2,35 7.4,35 7.6,95 7.8,35 9.6,35 9.8,70 10,35 10.1,35 10.2,85 10.4,35 12,35 12,0Z" fill="#eef6ea" stroke="#50a850" vector-effect="non-scaling-stroke"/>
</g>
<path d="M242 48V265" stroke="#aaa" stroke-dasharray="3 3"/>
<path d="M39 161H498" stroke="#aaa" stroke-dasharray="3 3"/>
<g><circle cx="242" cy="104" r="4" fill="#b070d8"/><circle cx="242" cy="134" r="4" fill="#4a7ad8"/><circle cx="242" cy="164" r="4" fill="#e03a48"/><circle cx="242" cy="184" r="4" fill="#f07a30"/><circle cx="242" cy="203" r="4" fill="#6a9be6"/><circle cx="242" cy="237" r="4" fill="#e8c020"/><circle cx="242" cy="255" r="4" fill="#50a850"/></g>
</svg>
<div class="tbl" style="left:506px;width:413px">
<div class="r h" style="grid-template-columns:30px 172px 60px 72px 71px 8px"><span></span><span>Name</span><span class="n">Mean</span><span class="n">Max ⌄</span><span class="n">Last *</span></div>
<div class="r" style="grid-template-columns:30px 172px 60px 72px 71px 8px"><i class="sw" style="background:#d83040"></i><span>internal management</span><span class="n">82.5</span><span class="n">152</span><span class="n">61</span></div>
<div class="r" style="grid-template-columns:30px 172px 60px 72px 71px 8px"><i class="sw" style="background:#5a95e0"></i><span>customer</span><span class="n">119</span><span class="n">120</span><span class="n">120</span></div>
<div class="r" style="grid-template-columns:30px 172px 60px 72px 71px 8px"><i class="sw" style="background:#a45ad0"></i><span>request platform operations</span><span class="n">110</span><span class="n">117</span><span class="n">112</span></div>
<div class="r" style="grid-template-columns:30px 172px 60px 72px 71px 8px"><i class="sw" style="background:#2f6fd8"></i><span>product versions releases</span><span class="n">107</span><span class="n">107</span><span class="n">107</span></div>
<div class="r" style="grid-template-columns:30px 172px 60px 72px 71px 8px"><i class="sw" style="background:#f06a14"></i><span>general process</span><span class="n">73.2</span><span class="n">80</span><span class="n">71</span></div>
<div class="r" style="grid-template-columns:30px 172px 60px 72px 71px 8px"><i class="sw" style="background:#4ca64c"></i><span>azure integration</span><span class="n">46.7</span><span class="n">74</span><span class="n">35</span></div>
<div class="r" style="grid-template-columns:30px 172px 60px 72px 71px 8px"><i class="sw" style="background:#e0b61a"></i><span>continuous delivery</span><span class="n">64</span><span class="n">64</span><span class="n">64</span></div>
</div>
</div>

</body></html>
